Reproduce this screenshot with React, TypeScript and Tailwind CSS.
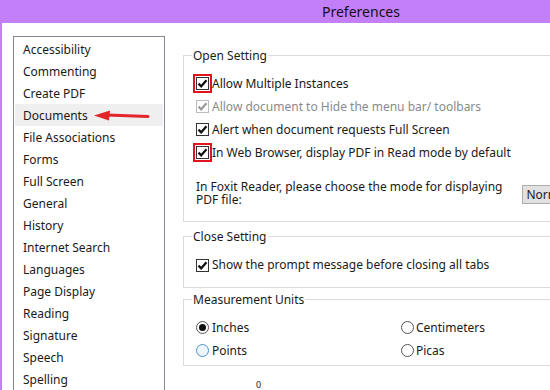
import React from 'react';

const categories = [
  'Accessibility',
  'Commenting',
  'Create PDF',
  'Documents',
  'File Associations',
  'Forms',
  'Full Screen',
  'General',
  'History',
  'Internet Search',
  'Languages',
  'Page Display',
  'Reading',
  'Signature',
  'Speech',
  'Spelling',
];

function Check({ disabled = false, marked = false }: { disabled?: boolean; marked?: boolean }) {
  return (
    <span
      className={
        'flex h-[13px] w-[13px] shrink-0 items-center justify-center border bg-white ' +
        (disabled ? 'border-[#bcbcbc] ' : 'border-[#333333] ') +
        (marked ? 'outline-2 outline-offset-[1px] outline-[#e0141e]' : '')
      }
    >
      <svg width="11" height="11" viewBox="0 0 11 11">
        <path
          d="M1.5 5.6 L4.2 8.3 L9.5 2.2"
          fill="none"
          stroke={disabled ? '#9a9a9a' : '#111111'}
          strokeWidth="2.2"
        />
      </svg>
    </span>
  );
}

function Radio({ checked = false, hover = false }: { checked?: boolean; hover?: boolean }) {
  return (
    <span
      className={
        'flex h-[13px] w-[13px] shrink-0 items-center justify-center rounded-full border ' +
        (hover ? 'border-[#4f94d4] bg-[#eef6fc]' : 'border-[#555555] bg-white')
      }
    >
      {checked && <span className="h-[7px] w-[7px] rounded-full bg-[#111111]" />}
    </span>
  );
}

function Group({ label, className, children }: { label: string; className: string; children: React.ReactNode }) {
  return (
    <div className={'relative w-[400px] border border-[#dcdcdc] ' + className}>
      <span className="absolute left-[8px] top-[-8px] bg-white px-[1px] leading-[16px]">{label}</span>
      {children}
    </div>
  );
}

export default function App() {
  return (
    <div className="h-[390px] w-[550px] overflow-hidden bg-white text-[12px] text-[#1a1a1a] [font-family:'Noto_Sans',sans-serif]">
      <div className="h-[23px] bg-[#c27ff7] pl-[322px] text-[14px] leading-[23px] text-[#111111]">
        Preferences
      </div>

      <div className="flex h-[367px] border-l-2 border-[#c27ff7]">
        <div className="pl-[11px] pt-[13px]">
          <ul className="h-[400px] w-[152px] border border-[#828790] bg-white px-[1px] pt-[1px]">
            {categories.map((c) => (
              <li
                key={c}
                className={
                  'relative h-[22px] pl-[8px] leading-[24px] ' + (c === 'Documents' ? 'bg-[#efefef]' : '')
                }
              >
                {c}
                {c === 'Documents' && (
                  <svg className="absolute left-[78px] top-[5px]" width="58" height="13" viewBox="0 0 58 13">
                    <path d="M14 6 L55 7.5" stroke="#e3242b" strokeWidth="3" strokeLinecap="round" />
                    <path d="M1 6.5 L17 1.5 L16 11.5 Z" fill="#e3242b" />
                  </svg>
                )}
              </li>
            ))}
          </ul>
        </div>

        <div className="flex flex-col pl-[18px] pt-[32px]">
          <Group label="Open Setting" className="h-[168px] pl-[12px] pt-[16px]">
            <div className="flex h-[23px] items-center gap-[3px]">
              <Check marked />
              <span>Allow Multiple Instances</span>
            </div>
            <div className="flex h-[23px] items-center gap-[3px] text-[#8a8a8a]">
              <Check disabled />
              <span>Allow document to Hide the menu bar/ toolbars</span>
            </div>
            <div className="flex h-[23px] items-center gap-[3px]">
              <Check />
              <span>Alert when document requests Full Screen</span>
            </div>
            <div className="flex h-[23px] items-center gap-[3px]">
              <Check marked />
              <span>In Web Browser, display PDF in Read mode by default</span>
            </div>
            <div className="mt-[16px] flex items-start">
              <p className="w-[320px] leading-[13px]">
                In Foxit Reader, please choose the mode for displaying PDF file:
              </p>
              <div className="ml-[9px] mt-[5px] h-[19px] w-[60px] border border-[#adadad] bg-[#e1e1e1] pl-[3px] leading-[17px]">
                Normal
              </div>
            </div>
          </Group>

          <Group label="Close Setting" className="mt-[14px] h-[53px] pl-[12px] pt-[17px]">
            <div className="flex h-[23px] items-center gap-[3px]">
              <Check />
              <span>Show the prompt message before closing all tabs</span>
            </div>
          </Group>

          <Group label="Measurement Units" className="mt-[11px] h-[67px] pl-[12px] pt-[16px]">
            <div className="grid w-[320px] grid-cols-[205px_1fr]">
              <div className="flex h-[23px] items-center gap-[3px]">
                <Radio checked />
                <span>Inches</span>
              </div>
              <div className="flex h-[23px] items-center gap-[2px]">
                <Radio />
                <span>Centimeters</span>
              </div>
              <div className="flex h-[23px] items-center gap-[3px]">
                <Radio hover />
                <span>Points</span>
              </div>
              <div className="flex h-[23px] items-center gap-[2px]">
                <Radio />
                <span>Picas</span>
              </div>
            </div>
          </Group>

          <div className="pl-[73px] pt-[14px] text-[9px] leading-[10px]">0</div>
        </div>
      </div>
    </div>
  );
}
